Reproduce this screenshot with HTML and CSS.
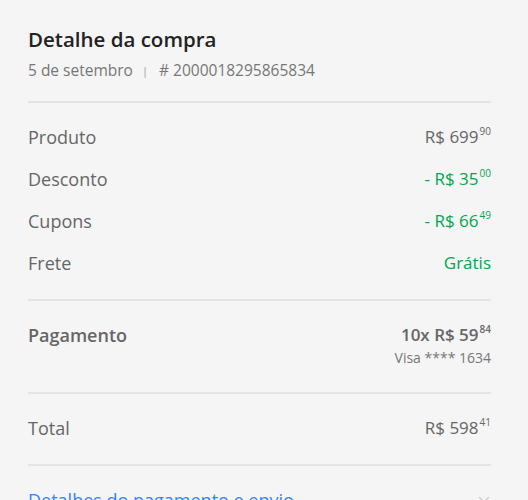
FILE: index.html
```html
<!DOCTYPE html>
<html lang="pt-BR">
<head>
    <meta charset="UTF-8">
    <title>Detalhe da compra</title>
    <link rel="stylesheet" href="styles.css">
</head>
<body>
    <div class="detalhe">
        <div class="cabecalho">
            <h2 class="titulo">Detalhe da compra</h2>
            <p class="sub">5 de setembro <span class="sep">|</span> # 2000018295865834</p>
        </div>

        <div class="bloco">
            <div class="linha">
                <span>Produto</span>
                <span class="valor">R$ 699<sup>90</sup></span>
            </div>
            <div class="linha">
                <span>Desconto</span>
                <span class="valor verde">- R$ 35<sup>00</sup></span>
            </div>
            <div class="linha">
                <span>Cupons</span>
                <span class="valor verde">- R$ 66<sup>49</sup></span>
            </div>
            <div class="linha">
                <span>Frete</span>
                <span class="valor verde">Grátis</span>
            </div>
        </div>

        <div class="bloco">
            <div class="linha">
                <span class="forte">Pagamento</span>
                <div class="pagto">
                    <span class="valor forte">10x R$ 59<sup>84</sup></span>
                    <span class="cartao">Visa **** 1634</span>
                </div>
            </div>
        </div>

        <div class="bloco">
            <div class="linha">
                <span>Total</span>
                <span class="valor">R$ 598<sup>41</sup></span>
            </div>
        </div>

        <div class="bloco rodape">
            <a href="#" class="link">Detalhes do pagamento e envio</a>
            <svg class="seta" width="14" height="14" viewBox="0 0 14 14">
                <path d="M2 4 L7 9 L12 4" fill="none" stroke="#d0d0d0" stroke-width="1.5"/>
            </svg>
        </div>
    </div>
</body>
</html>
```

FILE: styles.css
```css
body {
    margin: 0;
    background-color: #f5f5f5;
    font-family: "Open Sans", "Liberation Sans", sans-serif;
    color: #666;
}

.detalhe {
    padding: 24px 37px 0 28px;
}

.cabecalho {
    padding-bottom: 20px;
}

.titulo {
    margin: 0;
    font-size: 20.5px;
    font-weight: 600;
    color: #222;
    line-height: 30px;
}

.sub {
    margin: 6px 0 0;
    font-size: 15.5px;
    color: #777;
    line-height: 20px;
}

.sep {
    margin: 0 7px 0 5px;
    font-size: 11px;
    color: #999;
    vertical-align: 1px;
}

.bloco {
    border-top: 2px solid #e4e4e4;
    padding-top: 23px;
    padding-bottom: 25px;
}

.linha {
    display: flex;
    justify-content: space-between;
    align-items: flex-start;
    font-size: 18px;
    line-height: 22px;
    margin-bottom: 20px;
}

.linha:last-child {
    margin-bottom: 0;
}

.valor {
    font-size: 17px;
}

.valor sup {
    font-size: 10px;
    vertical-align: 8px;
    line-height: 0;
    margin-left: 1px;
}

.verde {
    color: #00a650;
}

.forte {
    font-weight: 600;
    color: #666;
}

.pagto {
    display: flex;
    flex-direction: column;
    align-items: flex-end;
}

.cartao {
    font-size: 14px;
    color: #777;
    line-height: 18px;
    margin-top: 3px;
}

.rodape {
    display: flex;
    justify-content: space-between;
    align-items: center;
}

.link {
    color: #3483fa;
    text-decoration: none;
    font-size: 18px;
    line-height: 22px;
}

.seta {
    margin-right: 0;
}
```
